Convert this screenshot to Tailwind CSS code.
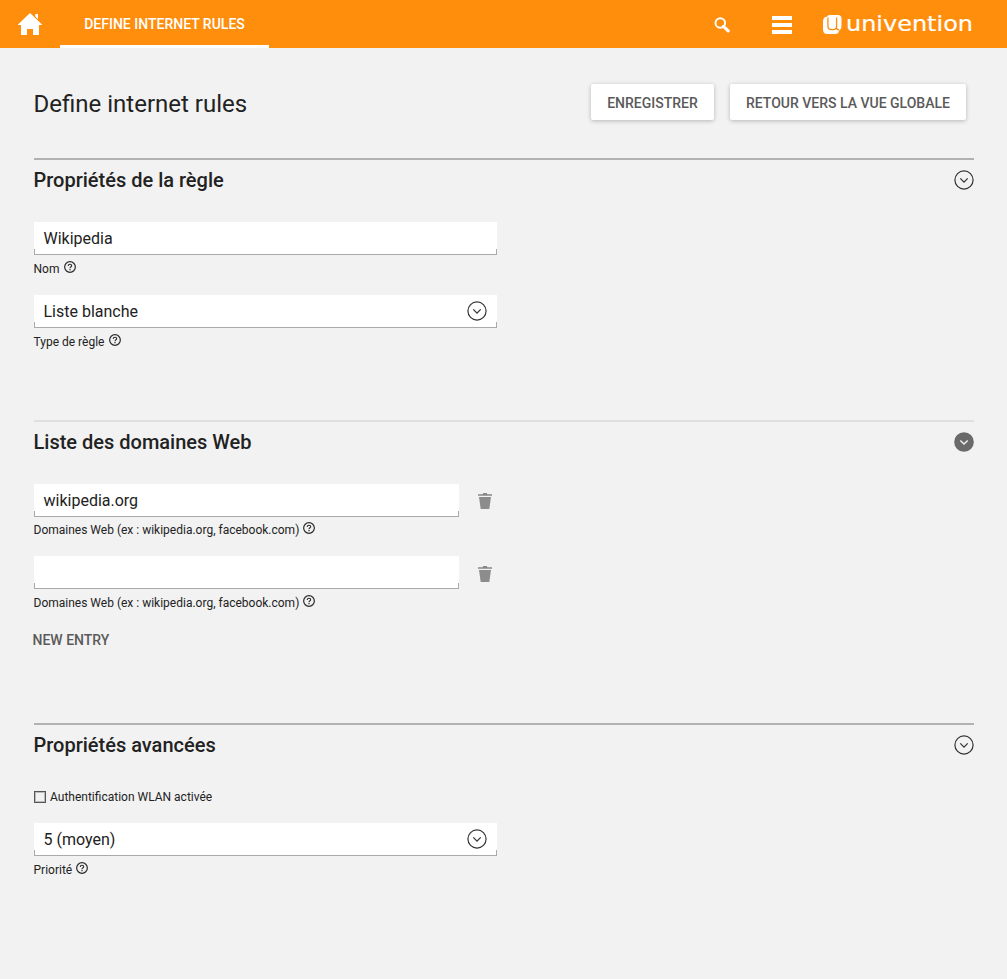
<!DOCTYPE html>
<html lang="fr">
<head>
<meta charset="utf-8">
<title>Define internet rules</title>
<script src="https://cdn.jsdelivr.net/npm/@tailwindcss/browser@4"></script>
</head>
<body class="h-[979px] bg-[#f2f2f2] font-['Roboto',sans-serif] text-[#222] overflow-hidden">
<svg class="hidden">
  <symbol id="chev" viewBox="0 0 20 20"><circle cx="10" cy="10" r="9.1" fill="none" stroke="#333" stroke-width="1.2"/><path d="M6.3 8.4 10 12.1l3.7-3.7" fill="none" stroke="#333" stroke-width="1.3"/></symbol>
  <symbol id="chev-solid" viewBox="0 0 20 20"><circle cx="10" cy="10" r="9.8" fill="#6a6a6a"/><path d="M6.3 8.4 10 12.1l3.7-3.7" fill="none" stroke="#f1f1f1" stroke-width="1.4"/></symbol>
  <symbol id="help" viewBox="0 0 12 12"><circle cx="6" cy="6" r="5.35" fill="none" stroke="#2c2c2c" stroke-width="1.2"/><path d="M4.3 4.9C4.3 3.8 5 3.2 6 3.2s1.7.6 1.7 1.5C7.700 5.700 6 5.900 6 7.300" fill="none" stroke="#2c2c2c" stroke-width="1.1"/><path d="M5.400 8.100h1.200v1.200H5.400z" fill="#2c2c2c"/></symbol>
  <symbol id="trash" viewBox="0 0 14 16"><path d="M5 0h4v1H5z" fill="#888"/><path d="M0 1h14v2H0z" fill="#a2a2a2"/><path d="M4.500 1h5v1h-5z" fill="#888"/><path d="M1 4h12l-1.700 12H2.700z" fill="#8c8c8c"/></symbol>
</svg>

<header class="flex h-12 bg-[#ff8e0d] text-white">
  <div class="w-[60px] pl-[18px] pt-[13px]">
    <svg width="24" height="22" viewBox="0 0 24 22" fill="#fff"><path d="M12 0 24 11.600V12h-3v10h-6v-6H9v6H3V12H0v-.4zM17.300 1H20v5.200l-2.700-2.600z"/></svg>
  </div>
  <div class="flex w-[209px] items-center justify-center border-b-3 border-white pt-[3px] text-sm font-medium">DEFINE INTERNET RULES</div>
  <div class="ml-auto flex pr-[33px]">
    <svg class="mt-[17px]" width="16" height="16" viewBox="0 0 16 16" fill="none" stroke="#fff"><circle cx="6.300" cy="6" r="4.800" stroke-width="1.900"/><path d="m9.500 9.300 4.700 4.600" stroke-width="3.100" stroke-linecap="round"/></svg>
    <svg class="ml-[42px] mt-4" width="20" height="18" fill="#fff"><path d="M0 0h20v4H0zM0 7h20v4H0zM0 14h20v4H0z"/></svg>
    <svg class="ml-[31px] mt-3" width="151" height="26" viewBox="0 0 151 26">
      <path d="M6.500 3H15q3.500 0 3.500 3.500v8q0 3-2.500 4.200Q15.500 22 12.500 22h-8Q0 22 0 17.500v-8Q0 5 4 4.800 4.500 3 6.500 3z" fill="#fff"/>
      <path d="M4.900 5.500v8.500q0 3.700 3.700 3.700h1.500q3.500 0 3.500-3.700V5.500M13.600 15.500q0 2.200 2.400 2.400" fill="none" stroke="#ff8e0d" stroke-width="1.300"/>
      <text x="23" y="19" textLength="127" lengthAdjust="spacingAndGlyphs" font-family="DejaVu Sans" font-size="21" fill="#fff" stroke="#fff" stroke-width=".2">univention</text>
    </svg>
  </div>
</header>

<main class="ml-[34px] w-[940px]">
  <div class="flex h-[110px] items-start justify-between pr-2 pt-9">
    <h1 class="-ml-[0.5px] mt-1 text-2xl">Define internet rules</h1>
    <div class="flex gap-4 text-sm font-medium text-[#5a5a5a]">
      <button class="h-9 w-[123px] rounded-[2px] bg-white pt-[2px] shadow-[0_1px_4px_rgba(0,0,0,.25)]">ENREGISTRER</button>
      <button class="h-9 w-[236px] rounded-[2px] bg-white pt-[2px] shadow-[0_1px_4px_rgba(0,0,0,.25)]">RETOUR VERS LA VUE GLOBALE</button>
    </div>
  </div>

  <section class="h-[262px] border-t-2 border-[#b2b2b2]">
    <div class="flex h-10 items-center justify-between"><h2 class="-ml-[0.5px] text-xl font-medium">Propriétés de la règle</h2><svg width="20" height="20"><use href="#chev"/></svg></div>
    <div class="relative mt-[22px] flex h-[33px] w-[463px] items-center border-b border-[#aaa] bg-white pl-[9.5px] pt-[2px]">Wikipedia
      <span class="absolute bottom-0 left-0 h-[5px] w-full border-x border-[#aaa]"></span></div>
    <div class="-ml-[0.5px] flex h-10 gap-[4.5px] pt-[5px] text-xs"><span class="pt-px">Nom</span><svg class="mt-px" width="12" height="12"><use href="#help"/></svg></div>
    <div class="relative flex h-[33px] w-[463px] items-center justify-between border-b border-[#aaa] bg-white pl-[9.5px] pr-[10px]"><span class="pt-[2px]">Liste blanche</span>
      <svg width="20" height="20"><use href="#chev"/></svg><span class="absolute bottom-0 left-0 h-[5px] w-full border-x border-[#aaa]"></span></div>
    <div class="-ml-[0.5px] flex gap-[4.5px] pt-[5px] text-xs"><span class="pt-px">Type de règle</span><svg class="mt-px" width="12" height="12"><use href="#help"/></svg></div>
  </section>

  <section class="h-[303px] border-t-2 border-[#dfdfdf]">
    <div class="flex h-10 items-center justify-between"><h2 class="-ml-[0.5px] text-xl font-medium">Liste des domaines Web</h2><svg width="20" height="20"><use href="#chev-solid"/></svg></div>
    <div class="mt-[22px] flex gap-[19px]">
      <div class="relative flex h-[33px] w-[425px] items-center border-b border-[#aaa] bg-white pl-[9.5px] pt-[2px]">wikipedia.org
        <span class="absolute bottom-0 left-0 h-[5px] w-full border-x border-[#aaa]"></span></div>
      <svg class="mt-[9px]" width="14" height="16"><use href="#trash"/></svg>
    </div>
    <div class="-ml-[0.5px] flex h-[39px] gap-[3.5px] pt-[5px] text-xs"><span>Domaines Web (ex : wikipedia.org, facebook.com)</span><svg width="12" height="12"><use href="#help"/></svg></div>
    <div class="flex gap-[19px]">
      <div class="relative h-[33px] w-[425px] border-b border-[#aaa] bg-white">
        <span class="absolute bottom-0 left-0 h-[5px] w-full border-x border-[#aaa]"></span></div>
      <svg class="mt-[10px]" width="14" height="16"><use href="#trash"/></svg>
    </div>
    <div class="-ml-[0.5px] flex h-[39px] gap-[3.5px] pt-[6px] text-xs"><span>Domaines Web (ex : wikipedia.org, facebook.com)</span><svg width="12" height="12"><use href="#help"/></svg></div>
    <button class="-ml-[1.5px] text-sm font-medium text-[#5a5a5a]">NEW ENTRY</button>
  </section>

  <section class="border-t-2 border-[#b2b2b2]">
    <div class="flex h-10 items-center justify-between"><h2 class="-ml-[0.5px] text-xl font-medium">Propriétés avancées</h2><svg width="20" height="20"><use href="#chev"/></svg></div>
    <div class="mt-6 flex h-[34px] items-start gap-1 text-xs"><span class="mt-[2px] size-3 border border-[#555] shadow-[inset_0_0_0_1px_#bbb]"></span><span>Authentification WLAN activée</span></div>
    <div class="relative flex h-[33px] w-[463px] items-center justify-between border-b border-[#aaa] bg-white pl-[9.5px] pr-[10px]"><span class="pt-[2px]">5 (moyen)</span>
      <svg width="20" height="20"><use href="#chev"/></svg><span class="absolute bottom-0 left-0 h-[5px] w-full border-x border-[#aaa]"></span></div>
    <div class="-ml-[0.5px] flex gap-[3.5px] pt-[5px] text-xs"><span class="pt-px">Priorité</span><svg class="mt-px" width="12" height="12"><use href="#help"/></svg></div>
  </section>
</main>
</body>
</html>
